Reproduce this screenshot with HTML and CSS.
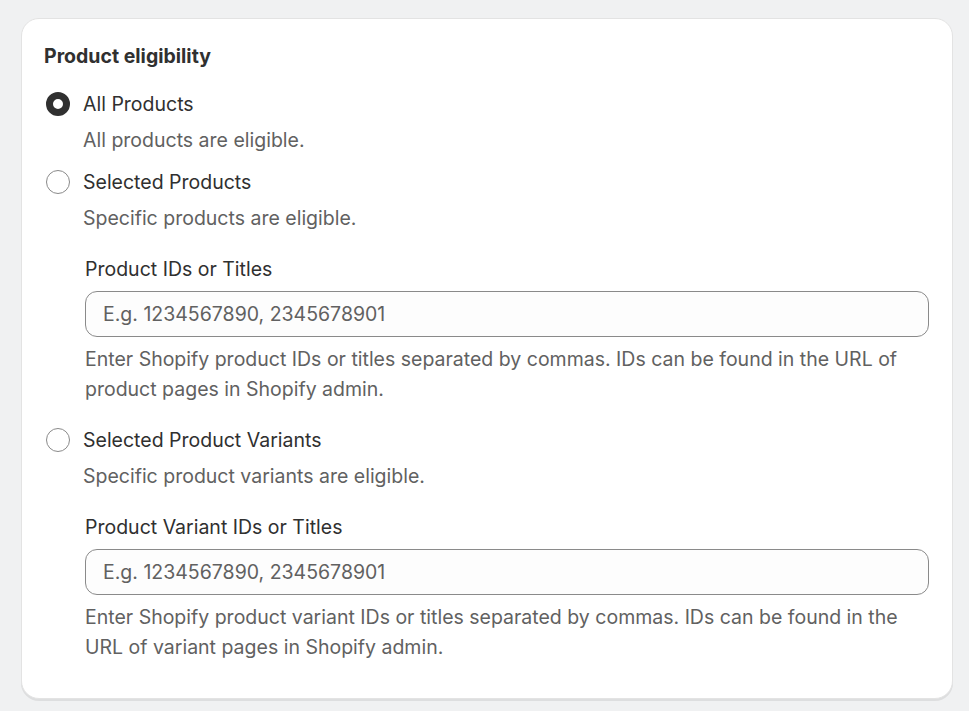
FILE: index.html
```html
<!DOCTYPE html>
<html lang="en">
<head>
<meta charset="utf-8">
<title>Product eligibility</title>
<link rel="stylesheet" href="styles.css">
</head>
<body>
<div class="card">
  <h2 class="title">Product eligibility</h2>
  <div class="options">
    <div class="option">
      <label class="choice">
        <span class="radio checked"></span>
        <span class="choice-label">All Products</span>
      </label>
      <div class="desc">All products are eligible.</div>
    </div>
    <div class="option">
      <label class="choice">
        <span class="radio"></span>
        <span class="choice-label">Selected Products</span>
      </label>
      <div class="desc">Specific products are eligible.</div>
      <div class="field">
        <div class="field-label">Product IDs or Titles</div>
        <div class="input"><span class="placeholder">E.g. 1234567890, 2345678901</span></div>
        <div class="help">Enter Shopify product IDs or titles separated by commas. IDs can be found in the URL of product pages in Shopify admin.</div>
      </div>
    </div>
    <div class="option">
      <label class="choice">
        <span class="radio"></span>
        <span class="choice-label">Selected Product Variants</span>
      </label>
      <div class="desc">Specific product variants are eligible.</div>
      <div class="field">
        <div class="field-label">Product Variant IDs or Titles</div>
        <div class="input"><span class="placeholder">E.g. 1234567890, 2345678901</span></div>
        <div class="help">Enter Shopify product variant IDs or titles separated by commas. IDs can be found in the URL of variant pages in Shopify admin.</div>
      </div>
    </div>
  </div>
</div>
</body>
</html>
```

FILE: styles.css
```css
html, body {
  margin: 0;
  padding: 0;
  background: #f0f1f2;
}
body {
  font-family: Inter, "Noto Sans", sans-serif;
  color: #303030;
  font-size: 19.5px;
  line-height: 30px;
  padding: 18px 16px 12px 21px;
}
.card {
  background: #fff;
  border-radius: 18px;
  border: 1px solid #e3e3e3;
  box-shadow: 0 2px 0 rgba(0,0,0,0.08);
  padding: 22px 23px 27px 22px;
}
.title {
  margin: 0;
  font-size: 19.5px;
  font-weight: 650;
  line-height: 30px;
  color: #303030;
}
.options {
  margin-top: 18px;
  display: flex;
  flex-direction: column;
  gap: 12px;
}
.choice {
  display: flex;
  align-items: center;
  gap: 13px;
  margin-left: 2px;
}
.radio {
  width: 24px;
  height: 24px;
  box-sizing: border-box;
  border-radius: 50%;
  border: 1.5px solid #8a8a8a;
  background: #fff;
  flex: none;
}
.radio.checked {
  border: 7px solid #303030;
}
.choice-label {
  color: #303030;
}
.desc {
  margin-top: 6px;
  padding-left: 39px;
  color: #616161;
}
.field {
  margin-top: 21px;
  padding-left: 41px;
  margin-bottom: 9px;
}
.field-label {
  color: #303030;
}
.input {
  margin-top: 7px;
  height: 46px;
  box-sizing: border-box;
  border: 1px solid #8a8a8a;
  border-radius: 12px;
  background: #fdfdfd;
  display: flex;
  align-items: center;
  padding: 0 17px;
}
.placeholder {
  color: #616161;
}
.help {
  margin-top: 7px;
  color: #616161;
}
```
